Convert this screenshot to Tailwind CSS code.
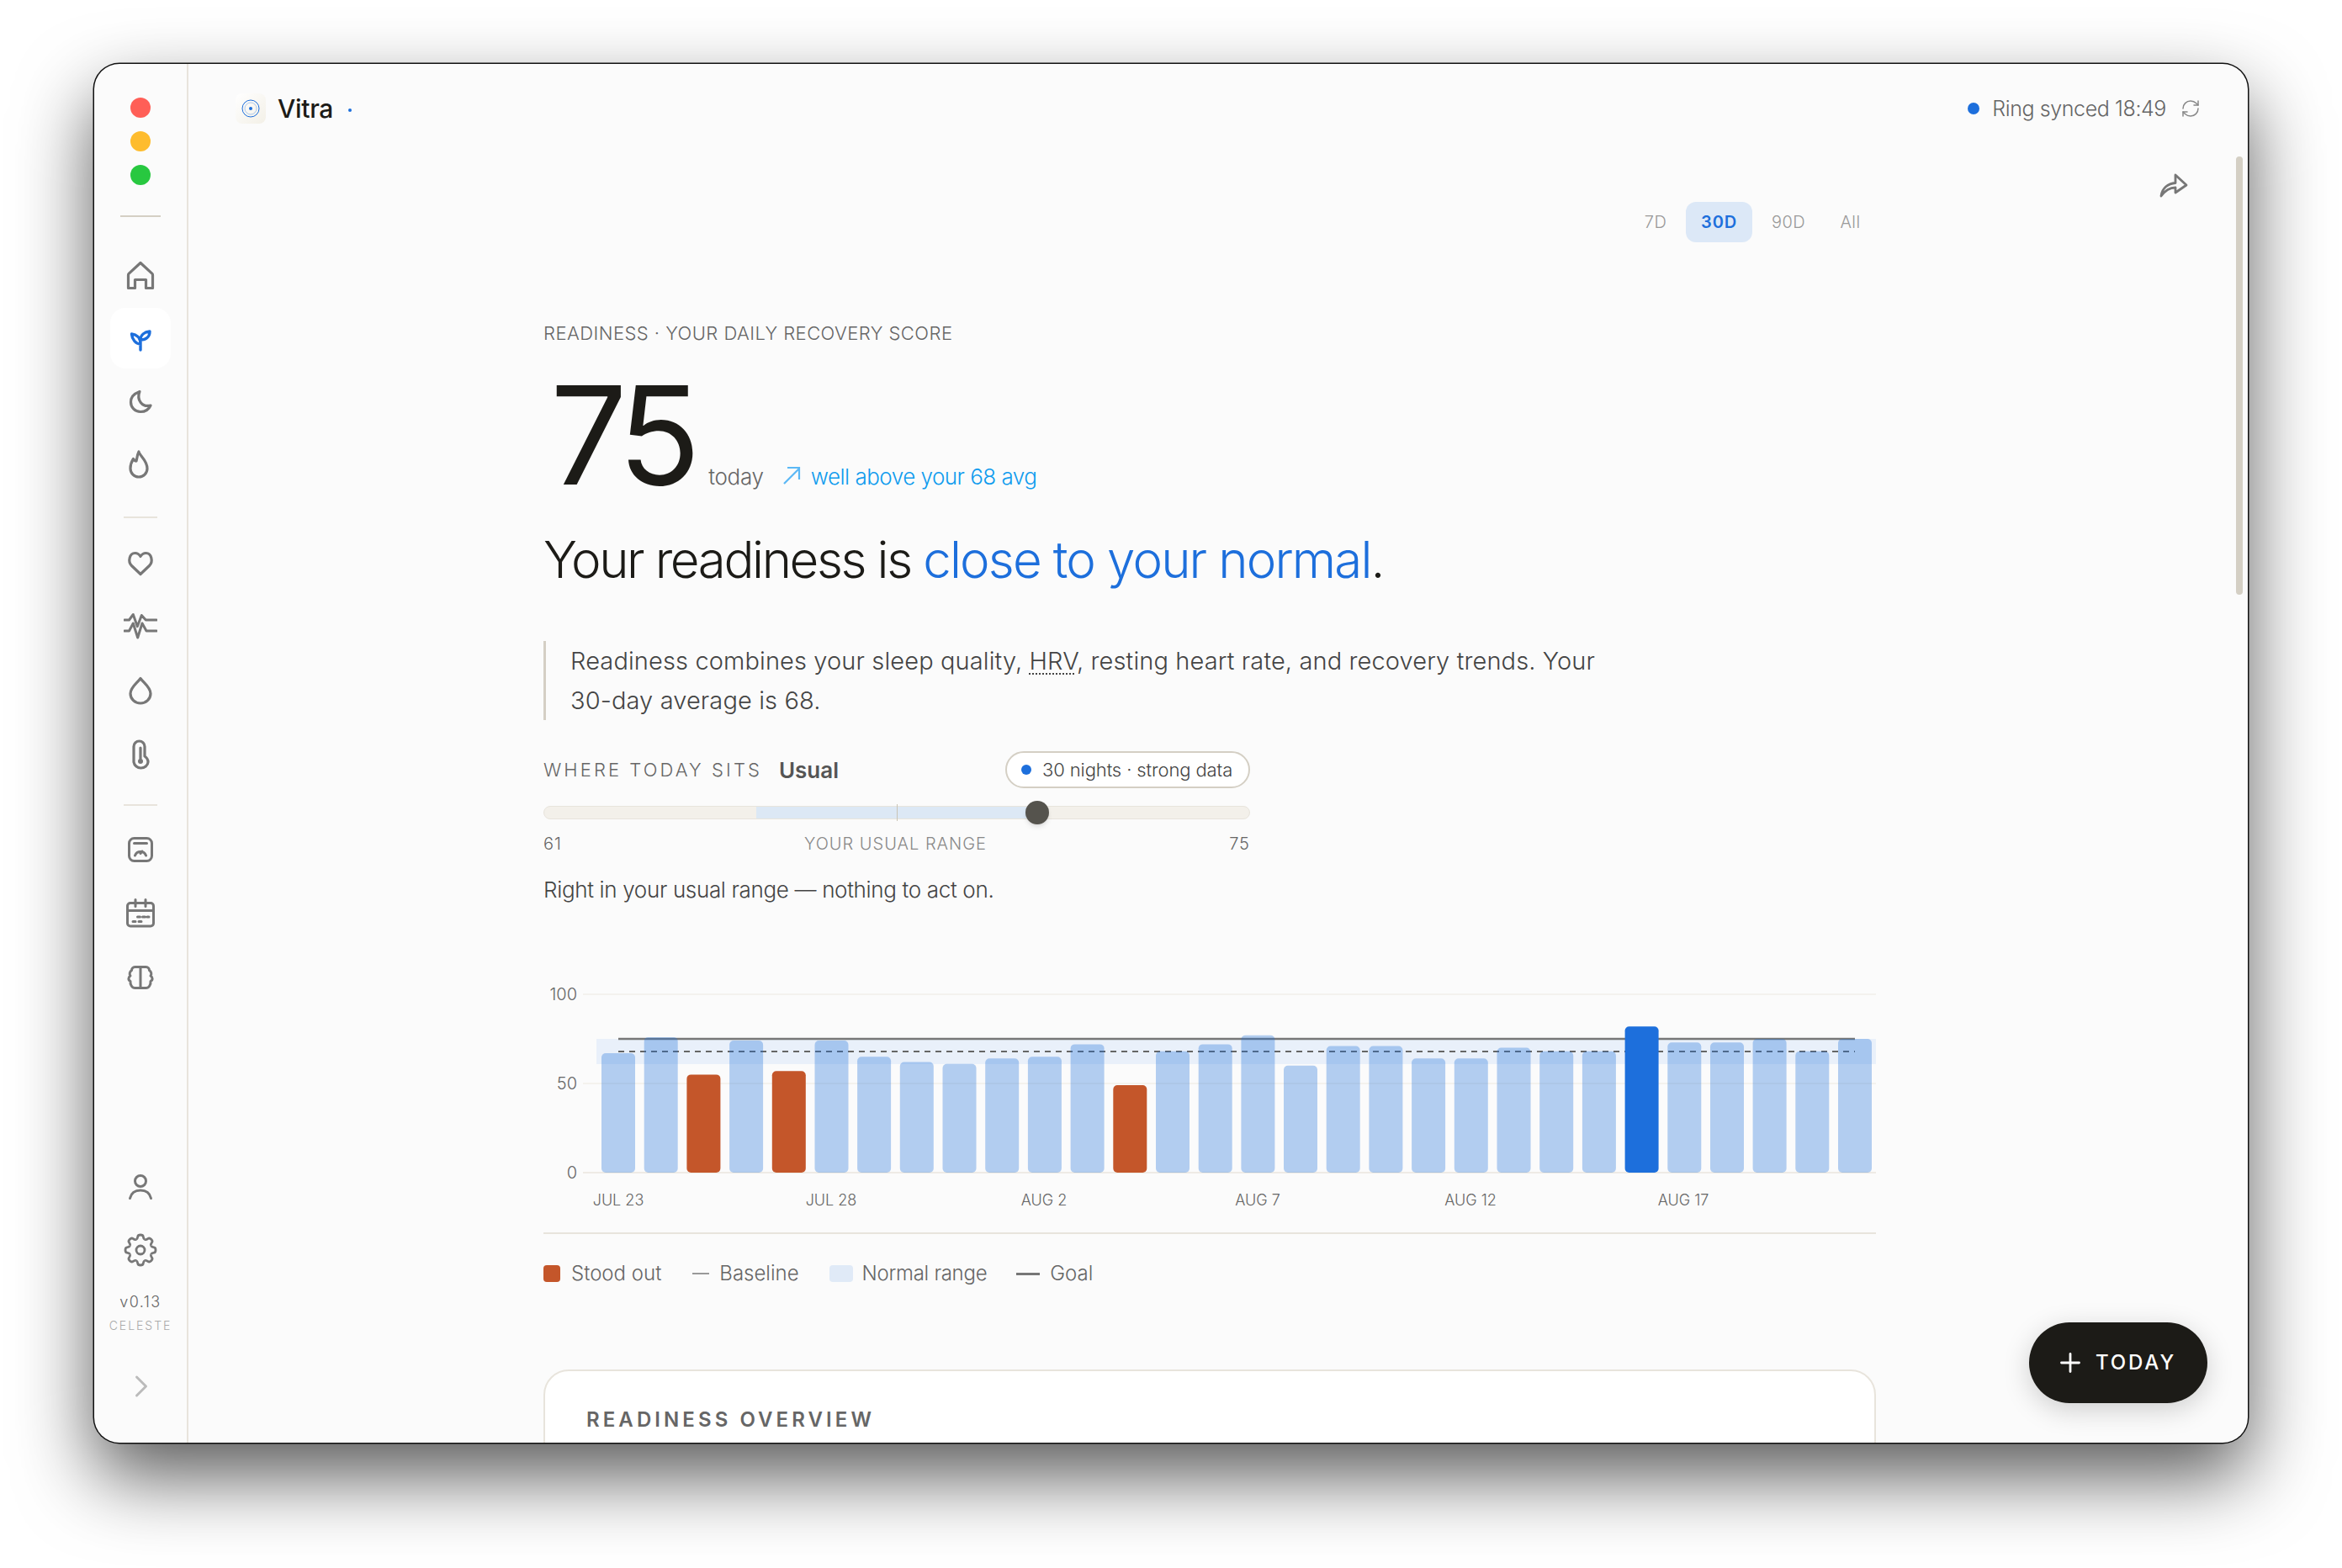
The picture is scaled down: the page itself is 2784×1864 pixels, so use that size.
<!DOCTYPE html>
<html lang="en">
<head>
    <meta charset="UTF-8">
    <title>Vitra - Readiness</title>
    <script src="https://cdn.jsdelivr.net/npm/@tailwindcss/browser@4"></script>
</head>
<body class="bg-white font-['Inter',sans-serif] w-[2784px] h-[1864px] overflow-hidden pt-[76px] pl-[112px]">
    <div class="w-[2560px] h-[1639px] rounded-[30px] bg-[#fbfbfb] flex overflow-hidden shadow-[0_0_0_1.5px_#111,0_40px_90px_rgba(0,0,0,0.65)]">

        <!-- Sidebar -->
        <aside class="w-[112px] h-full shrink-0 border-r-2 border-[#e8e4dc] flex flex-col items-center text-[#777]">
            <div class="flex flex-col gap-4 pt-[40px]">
                <div class="w-6 h-6 rounded-full bg-[#ff5f57]"></div>
                <div class="w-6 h-6 rounded-full bg-[#febc2e]"></div>
                <div class="w-6 h-6 rounded-full bg-[#28c840]"></div>
            </div>
            <div class="w-12 h-0.5 bg-[#d4cfc4] mt-[36px]"></div>

            <nav class="flex flex-col gap-[3px] mt-[33px]">
                <a class="w-[72px] h-[72px] flex items-center justify-center">
                    <svg class="w-10 h-10" viewBox="0 0 40 40" fill="none" stroke="currentColor" stroke-width="3.2" stroke-linejoin="round" stroke-linecap="round"><path d="M5.5 35.5V20a2.500 2.500 0 0 1 .8-1.800L20 5.500l13.700 12.700a2.500 2.500 0 0 1 .8 1.800v15.500h-8V25.500h-13v10z"/></svg>
                </a>
                <a class="w-[72px] h-[72px] flex items-center justify-center bg-white rounded-[18px] text-[#1d6fdc]">
                    <svg class="w-10 h-10" viewBox="0 0 40 40" fill="none" stroke="currentColor" stroke-width="3.4" stroke-linejoin="round" stroke-linecap="round"><path d="M20 34V22M20 27C14 27 10 21 9.500 15C15 15.500 20 19 20 27ZM20 22C20 16 25 12.500 31 12C31 18 27 22 20 22Z"/></svg>
                </a>
                <a class="w-[72px] h-[72px] flex items-center justify-center">
                    <svg class="w-10 h-10" viewBox="0 0 40 40" fill="none" stroke="currentColor" stroke-width="3.2" stroke-linejoin="round" stroke-linecap="round"><path d="M19 8.500a12.500 12.500 0 0 1 -1 .5C14 10.500 8.500 14 8.500 21c0 6.500 5 11.500 11.500 11.500 5.500 0 10-3 12-7.500-10 2.500-17-6.500-13-16.500z"/></svg>
                </a>
                <a class="w-[72px] h-[72px] flex items-center justify-center">
                    <svg class="w-10 h-10 -translate-x-[2px]" viewBox="0 0 40 40" fill="none" stroke="currentColor" stroke-width="3.2" stroke-linejoin="round" stroke-linecap="round"><path d="M20 5C21 10 30 15 30 25A10 10 0 0 1 10 25C10 20 11.500 16.500 13.500 13.500C14.500 15 15.500 16.500 17 16C18 13 18 9 20 5Z"/></svg>
                </a>
            </nav>

            <div class="w-10 h-0.5 bg-[#e8e4dc] mt-[26px]"></div>

            <nav class="flex flex-col gap-1 mt-[17px]">
                <a class="w-[72px] h-[72px] flex items-center justify-center">
                    <svg class="w-10 h-10" viewBox="0 0 40 40" fill="none" stroke="currentColor" stroke-width="3.2" stroke-linejoin="round"><path d="M20 33.500L9.500 23.500C4.500 18.500 7 8.500 13.500 8.500C16.500 8.500 18.500 10 20 12.500C21.500 10 23.500 8.500 26.500 8.500C33 8.500 35.500 18.500 30.500 23.500Z"/></svg>
                </a>
                <a class="w-[72px] h-[72px] flex items-center justify-center">
                    <svg class="w-10 h-10" viewBox="0 0 40 40" fill="none" stroke="currentColor" stroke-width="3" stroke-linejoin="round" stroke-linecap="round"><path d="M1 12H6.500L11.300 5.500L16.300 19.700L21.300 6.500L26.300 12H39"/><path d="M1 25H6.500L11.300 16L16.700 33L22 16L27 25H39"/></svg>
                </a>
                <a class="w-[72px] h-[72px] flex items-center justify-center">
                    <svg class="w-10 h-10" viewBox="0 0 40 40" fill="none" stroke="currentColor" stroke-width="3.2" stroke-linejoin="round"><path d="M20 5.500C24 11 32 16 32 23.500A12 11.500 0 0 1 8 23.500C8 16 16 11 20 5.500Z"/></svg>
                </a>
                <a class="w-[72px] h-[72px] flex items-center justify-center">
                    <svg class="w-10 h-10" viewBox="0 0 40 40" fill="none" stroke="currentColor" stroke-width="3.2" stroke-linejoin="round" stroke-linecap="round"><path d="M12 10.500A6.500 6.500 0 0 1 25 10.500V22C28 24 29 26 29 29A8.500 7.500 0 0 1 20.500 36A8.500 8.500 0 0 1 12 29Z"/><path d="M20 12V25"/><circle cx="20" cy="28" r="3" fill="currentColor" stroke="none"/></svg>
                </a>
            </nav>

            <div class="w-10 h-0.5 bg-[#e8e4dc] mt-[23px]"></div>

            <nav class="flex flex-col gap-1 mt-[16px]">
                <a class="w-[72px] h-[72px] flex items-center justify-center">
                    <svg class="w-10 h-10" viewBox="0 0 40 40" fill="none" stroke="currentColor" stroke-width="3" stroke-linecap="round"><rect x="6.500" y="6.500" width="27" height="27" rx="6"/><path d="M12.500 12.500H27.500M13.500 27A7 7 0 0 1 26.500 27M20 24.500L22 22"/></svg>
                </a>
                <a class="w-[72px] h-[72px] flex items-center justify-center">
                    <svg class="w-10 h-10" viewBox="0 0 40 40" fill="none" stroke="currentColor" stroke-width="3" stroke-linecap="round"><rect x="4.500" y="7.500" width="31" height="27.500" rx="3.500"/><path d="M14 3.500V11.500M26 3.500V11.500M4.500 16.500H35.500"/><path d="M16.500 24H19.500M22.500 24H25.500M28 24H30M11 29.500H14M18 29.500H21"/></svg>
                </a>
                <a class="w-[72px] h-[72px] flex items-center justify-center">
                    <svg class="w-10 h-10" viewBox="0 0 40 40" fill="none" stroke="currentColor" stroke-width="3" stroke-linejoin="round" stroke-linecap="round"><path d="M20 7.500V32.500"/><path d="M20 7.500H13.500C11 7.500 9.500 9.500 9.500 11.500C7 13 6.500 16.500 8 18C5.500 19.500 5 23 8 24.500C7.500 28.500 10 32.500 13.500 32.500H26.500C30 32.500 32.500 28.500 32 24.500C35 23 34.500 19.500 32 18C33.500 16.500 33 13 30.500 11.500C30.500 9.500 29 7.500 26.500 7.500Z"/></svg>
                </a>
            </nav>

            <div class="mt-auto flex flex-col items-center pb-[47px]">
                <a class="w-[72px] h-[72px] flex items-center justify-center">
                    <svg class="w-10 h-10" viewBox="0 0 40 40" fill="none" stroke="currentColor" stroke-width="3" stroke-linecap="round"><circle cx="20" cy="13" r="6.500"/><path d="M7.500 33.500C9 27 14 24 20 24C26 24 31 27 32.500 33.500"/></svg>
                </a>
                <a class="w-[72px] h-[72px] flex items-center justify-center mt-[3px]">
                    <svg class="w-10 h-10" viewBox="0 0 40 40" fill="none" stroke="currentColor" stroke-width="2.800">
                        <circle cx="20" cy="20" r="5"/>
                        <path d="M14.830 7.530C16 7 16.500 6 16.800 4C17 2.500 18 2 20 2C22 2 23 2.500 23.200 4C23.500 6 24 7 25.170 7.530"/>
                        <path transform="rotate(45 20 20)" d="M14.830 7.530C16 7 16.500 6 16.800 4C17 2.500 18 2 20 2C22 2 23 2.500 23.200 4C23.500 6 24 7 25.170 7.530"/>
                        <path transform="rotate(90 20 20)" d="M14.830 7.530C16 7 16.500 6 16.800 4C17 2.500 18 2 20 2C22 2 23 2.500 23.200 4C23.500 6 24 7 25.170 7.530"/>
                        <path transform="rotate(135 20 20)" d="M14.830 7.530C16 7 16.500 6 16.800 4C17 2.500 18 2 20 2C22 2 23 2.500 23.200 4C23.500 6 24 7 25.170 7.530"/>
                        <path transform="rotate(180 20 20)" d="M14.830 7.530C16 7 16.500 6 16.800 4C17 2.500 18 2 20 2C22 2 23 2.500 23.200 4C23.500 6 24 7 25.170 7.530"/>
                        <path transform="rotate(225 20 20)" d="M14.830 7.530C16 7 16.500 6 16.800 4C17 2.500 18 2 20 2C22 2 23 2.500 23.200 4C23.500 6 24 7 25.170 7.530"/>
                        <path transform="rotate(270 20 20)" d="M14.830 7.530C16 7 16.500 6 16.800 4C17 2.500 18 2 20 2C22 2 23 2.500 23.200 4C23.500 6 24 7 25.170 7.530"/>
                        <path transform="rotate(315 20 20)" d="M14.830 7.530C16 7 16.500 6 16.800 4C17 2.500 18 2 20 2C22 2 23 2.500 23.200 4C23.500 6 24 7 25.170 7.530"/>
                    </svg>
                </a>
                <div class="text-[18px] leading-6 font-light tracking-[0.08em] text-[#666] mt-[14px]">v0.13</div>
                <div class="text-[14px] leading-5 font-light tracking-[0.14em] text-[#aaa] mt-[6px]">CELESTE</div>
                <svg class="w-10 h-10 mt-[42px] text-[#bbb]" viewBox="0 0 40 40" fill="none" stroke="currentColor" stroke-width="3" stroke-linecap="round" stroke-linejoin="round"><path d="M15.500 9L26.500 20L15.500 31"/></svg>
            </div>
        </aside>

        <!-- Main -->
        <main class="relative flex-1 min-w-0 h-full overflow-hidden">
            <header class="h-[105px] px-14 flex items-center justify-between">
                <div class="flex items-center">
                    <div class="w-9 h-9 rounded-lg bg-gradient-to-br from-white to-[#f3f0e7] flex items-center justify-center">
                        <svg class="w-6 h-6" viewBox="0 0 24 24" fill="none" stroke="#1d6fdc"><circle cx="12" cy="12" r="10" stroke-width="1"/><circle cx="12" cy="12" r="7" stroke-width="0.7" stroke-opacity="0.5"/><circle cx="12" cy="12" r="2" fill="#1d6fdc" stroke="none"/></svg>
                    </div>
                    <span class="ml-[14px] text-[30px] leading-9 font-medium text-[#1c1b17] tracking-[-0.01em]">Vitra</span>
                    <span class="ml-[18px] mt-1 w-1 h-1 rounded-full bg-[#1d6fdc]"></span>
                </div>
                <div class="flex items-center text-[#666]">
                    <span class="w-[14px] h-[14px] rounded-full bg-[#1d6fdc]"></span>
                    <span class="ml-[15px] text-[25px] leading-8 font-light tracking-[-0.016em]">Ring synced 18:49</span>
                    <svg class="ml-[17px] w-6 h-6 text-[#888]" viewBox="0 0 24 24" fill="none" stroke="currentColor" stroke-width="1.500" stroke-linecap="round" stroke-linejoin="round"><path d="M3 12a9 9 0 0 1 9-9 9.750 9.750 0 0 1 6.740 2.740L21 8"/><path d="M21 3v5h-5"/><path d="M21 12a9 9 0 0 1-9 9 9.750 9.750 0 0 1-6.740-2.740L3 16"/><path d="M8 16H3v5"/></svg>
                </div>
            </header>

            <div class="ml-[422px] w-[1584px]">
                <!-- Range tabs -->
                <div class="mt-[59px] flex justify-end gap-1 text-[20px] text-[#999] font-light tracking-[0.02em]">
                    <button class="h-12 w-[64px] rounded-xl">7D</button>
                    <button class="h-12 w-[79px] rounded-xl bg-[#dce8f7] text-[#1d6fdc] font-semibold tracking-[0.04em]">30D</button>
                    <button class="h-12 w-[78px] rounded-xl">90D</button>
                    <button class="h-12 w-[61px] rounded-xl">All</button>
                </div>

                <div class="mt-[92px] text-[22px] leading-8 font-light text-[#666] tracking-[0.021em]">READINESS · YOUR DAILY RECOVERY SCORE</div>

                <div class="mt-[24px] flex items-baseline h-[162px]">
                    <span class="ml-[8px] text-[162px] leading-[162px] text-[#1c1b17] tracking-[-0.06em]">75</span>
                    <span class="ml-[19px] text-[26px] font-light text-[#666] tracking-[-0.01em]">today</span>
                    <svg class="ml-[21px] w-[24px] h-[24px] self-end mb-[21px] text-[#5bb8f5]" viewBox="0 0 24 24" fill="none" stroke="currentColor" stroke-width="2.200"><path d="M3 22L21 4M7 3H21V17"/></svg>
                    <span class="ml-[11px] text-[26px] font-light text-[#0f9bee] tracking-[-0.02em]">well above your 68 avg</span>
                </div>

                <h1 class="mt-[31px] text-[60px] leading-[72px] font-light text-[#1c1b17] tracking-[-0.04em]">Your readiness is <span class="text-[#1d6fdc] tracking-[-0.031em]">close to your normal</span>.</h1>

                <blockquote class="mt-[61px] border-l-[3px] border-[#d4cfc4] pl-[29px] w-[1300px] text-[29px] leading-[47px] font-light text-[#444] tracking-[0.004em]">
                    Readiness combines your sleep quality, <span class="underline decoration-dotted decoration-2 underline-offset-4">HRV</span>, resting heart rate, and recovery trends. Your<br>30-day average is 68.
                </blockquote>

                <!-- Where today sits -->
                <div class="w-[840px] mt-[37px]">
                    <div class="h-11 flex items-center justify-between">
                        <div class="flex items-center">
                            <span class="text-[22px] font-light tracking-[0.14em] text-[#666]">WHERE TODAY SITS</span>
                            <span class="ml-[20px] text-[26px] font-semibold text-[#555]">Usual</span>
                        </div>
                        <div class="h-11 w-[291px] rounded-full border-2 border-[#d4cfc4] bg-white flex items-center pl-[17px]">
                            <span class="w-3 h-3 rounded-full bg-[#1d6fdc]"></span>
                            <span class="ml-[13px] text-[22px] font-light text-[#444] tracking-[-0.005em]">30 nights · strong data</span>
                        </div>
                    </div>
                    <div class="relative h-4 mt-[21px] rounded-full bg-[#f3f0ea] border border-[#e8e4dc]">
                        <div class="absolute left-[252px] w-[324px] top-0 bottom-0 bg-[#dce8f5]"></div>
                        <div class="absolute left-[419px] -top-[3px] -bottom-[3px] w-px bg-[#c9c4b6]"></div>
                        <div class="absolute left-[572px] -top-[7px] w-7 h-7 rounded-full bg-[#55534d] shadow-md"></div>
                    </div>
                    <div class="mt-[15px] h-7 flex items-center justify-between text-[20px] font-light tracking-[0.05em]">
                        <span class="text-[#666]">61</span>
                        <span class="text-[#888]">YOUR USUAL RANGE</span>
                        <span class="text-[#666]">75</span>
                    </div>
                </div>

                <p class="mt-[23px] text-[26px] leading-9 font-light text-[#444] tracking-[-0.013em]">Right in your usual range — nothing to act on.</p>

                <!-- Chart -->
                <div class="mt-[84px] border-b-2 border-[#e8e4dc]">
                    <svg class="block font-light" width="1584" height="305" viewBox="0 0 1584 305" font-size="20" fill="#666">
                        <path d="M47 22H1584M47 128H1584" stroke="#f4f2ee" stroke-width="2"/>
                        <path d="M47 234H1584" stroke="#eeebe5" stroke-width="2"/>
                        <text x="40" y="29" text-anchor="end">100</text>
                        <text x="40" y="135" text-anchor="end">50</text>
                        <text x="40" y="241" text-anchor="end">0</text>
                        <rect x="63" y="75" width="1521" height="30" fill="#e9f0fa"/>
                        <path d="M89 75H1559" stroke="#777" stroke-width="2.500"/>
                        <path d="M89 90H1559" stroke="#666" stroke-width="2" stroke-dasharray="7 6"/>
                        <g fill="#1d6fdc" fill-opacity="0.33">
                            <rect x="69" y="92" width="40" height="142" rx="5"/>
                            <rect x="119.700" y="72.900" width="40" height="161.100" rx="5"/>
                            <rect x="221.100" y="77.100" width="40" height="156.900" rx="5"/>
                            <rect x="322.500" y="77.100" width="40" height="156.900" rx="5"/>
                            <rect x="373.100" y="96.200" width="40" height="137.800" rx="5"/>
                            <rect x="423.800" y="102.600" width="40" height="131.400" rx="5"/>
                            <rect x="474.500" y="104.700" width="40" height="129.300" rx="5"/>
                            <rect x="525.200" y="98.300" width="40" height="135.700" rx="5"/>
                            <rect x="575.900" y="96.200" width="40" height="137.800" rx="5"/>
                            <rect x="626.600" y="81.400" width="40" height="152.600" rx="5"/>
                            <rect x="728" y="89.800" width="40" height="144.200" rx="5"/>
                            <rect x="778.700" y="81.400" width="40" height="152.600" rx="5"/>
                            <rect x="829.400" y="70.800" width="40" height="163.200" rx="5"/>
                            <rect x="880" y="106.800" width="40" height="127.200" rx="5"/>
                            <rect x="930.700" y="83.500" width="40" height="150.500" rx="5"/>
                            <rect x="981.400" y="83.500" width="40" height="150.500" rx="5"/>
                            <rect x="1032.100" y="98.300" width="40" height="135.700" rx="5"/>
                            <rect x="1082.800" y="98.300" width="40" height="135.700" rx="5"/>
                            <rect x="1133.500" y="85.600" width="40" height="148.400" rx="5"/>
                            <rect x="1184.200" y="89.800" width="40" height="144.200" rx="5"/>
                            <rect x="1234.900" y="89.800" width="40" height="144.200" rx="5"/>
                            <rect x="1336.300" y="79.200" width="40" height="154.800" rx="5"/>
                            <rect x="1387" y="79.200" width="40" height="154.800" rx="5"/>
                            <rect x="1437.600" y="75" width="40" height="159" rx="5"/>
                            <rect x="1488.300" y="89.800" width="40" height="144.200" rx="5"/>
                            <rect x="1539" y="75" width="40" height="159" rx="5"/>
                        </g>
                        <g fill="#c4562a">
                            <rect x="170.400" y="117.400" width="40" height="116.600" rx="5"/>
                            <rect x="271.800" y="113.200" width="40" height="120.800" rx="5"/>
                            <rect x="677.300" y="130.100" width="40" height="103.900" rx="5"/>
                        </g>
                        <rect x="1285.600" y="60.200" width="40" height="173.800" rx="5" fill="#1d6fdc"/>
                        <g text-anchor="middle" font-size="18">
                            <text x="89" y="273">JUL 23</text>
                            <text x="342" y="273">JUL 28</text>
                            <text x="595" y="273">AUG 2</text>
                            <text x="849" y="273">AUG 7</text>
                            <text x="1102" y="273">AUG 12</text>
                            <text x="1355" y="273">AUG 17</text>
                        </g>
                    </svg>
                </div>

                <!-- Legend -->
                <div class="mt-[31px] h-8 flex items-center text-[24px] font-light text-[#666]">
                    <span class="w-5 h-5 rounded bg-[#c4562a]"></span>
                    <span class="ml-[13px]">Stood out</span>
                    <span class="ml-[37px] w-5 h-0.5 bg-[#999]"></span>
                    <span class="ml-[12px]">Baseline</span>
                    <span class="ml-[36px] w-7 h-5 rounded bg-[#e0eaf7]"></span>
                    <span class="ml-[11px] tracking-[-0.012em]">Normal range</span>
                    <span class="ml-[35px] w-7 h-[3px] bg-[#777]"></span>
                    <span class="ml-[12px]">Goal</span>
                </div>

                <!-- Overview card -->
                <section class="mt-[98px] h-[300px] rounded-[30px] border-2 border-[#e8e4dc] bg-white px-[49px] pt-[42px]">
                    <h2 class="text-[24px] leading-8 font-semibold tracking-[0.17em] text-[#666]">READINESS OVERVIEW</h2>
                </section>
            </div>

            <!-- Share -->
            <button class="absolute left-[2343px] top-[129px]">
                <svg class="block w-[34px] h-[30px] text-[#777]" viewBox="-2 -2 34 30" fill="none" stroke="currentColor" stroke-width="2.800" stroke-linejoin="round"><path d="M0 26C1 17 8 11 17 10.500V1L30 13L17 22V16C10 16 5 19 0 26Z"/></svg>
            </button>

            <!-- Scrollbar -->
            <div class="absolute right-[6px] top-[110px] w-2 h-[521px] rounded-full bg-[#d4cfc4]"></div>

            <!-- Today button -->
            <button class="absolute right-[48px] bottom-[47px] w-[212px] h-[96px] rounded-full bg-[#1c1b17] text-white flex items-center justify-center shadow-[0_8px_32px_rgba(0,0,0,0.18)]">
                <svg class="w-6 h-6" viewBox="0 0 24 24" fill="none" stroke="currentColor" stroke-width="2.800" stroke-linecap="round"><path d="M12 1.500V22.500M1.500 12H22.500"/></svg>
                <span class="ml-[18px] text-[24px] font-medium tracking-[0.12em]">TODAY</span>
            </button>
        </main>
    </div>
</body>
</html>
